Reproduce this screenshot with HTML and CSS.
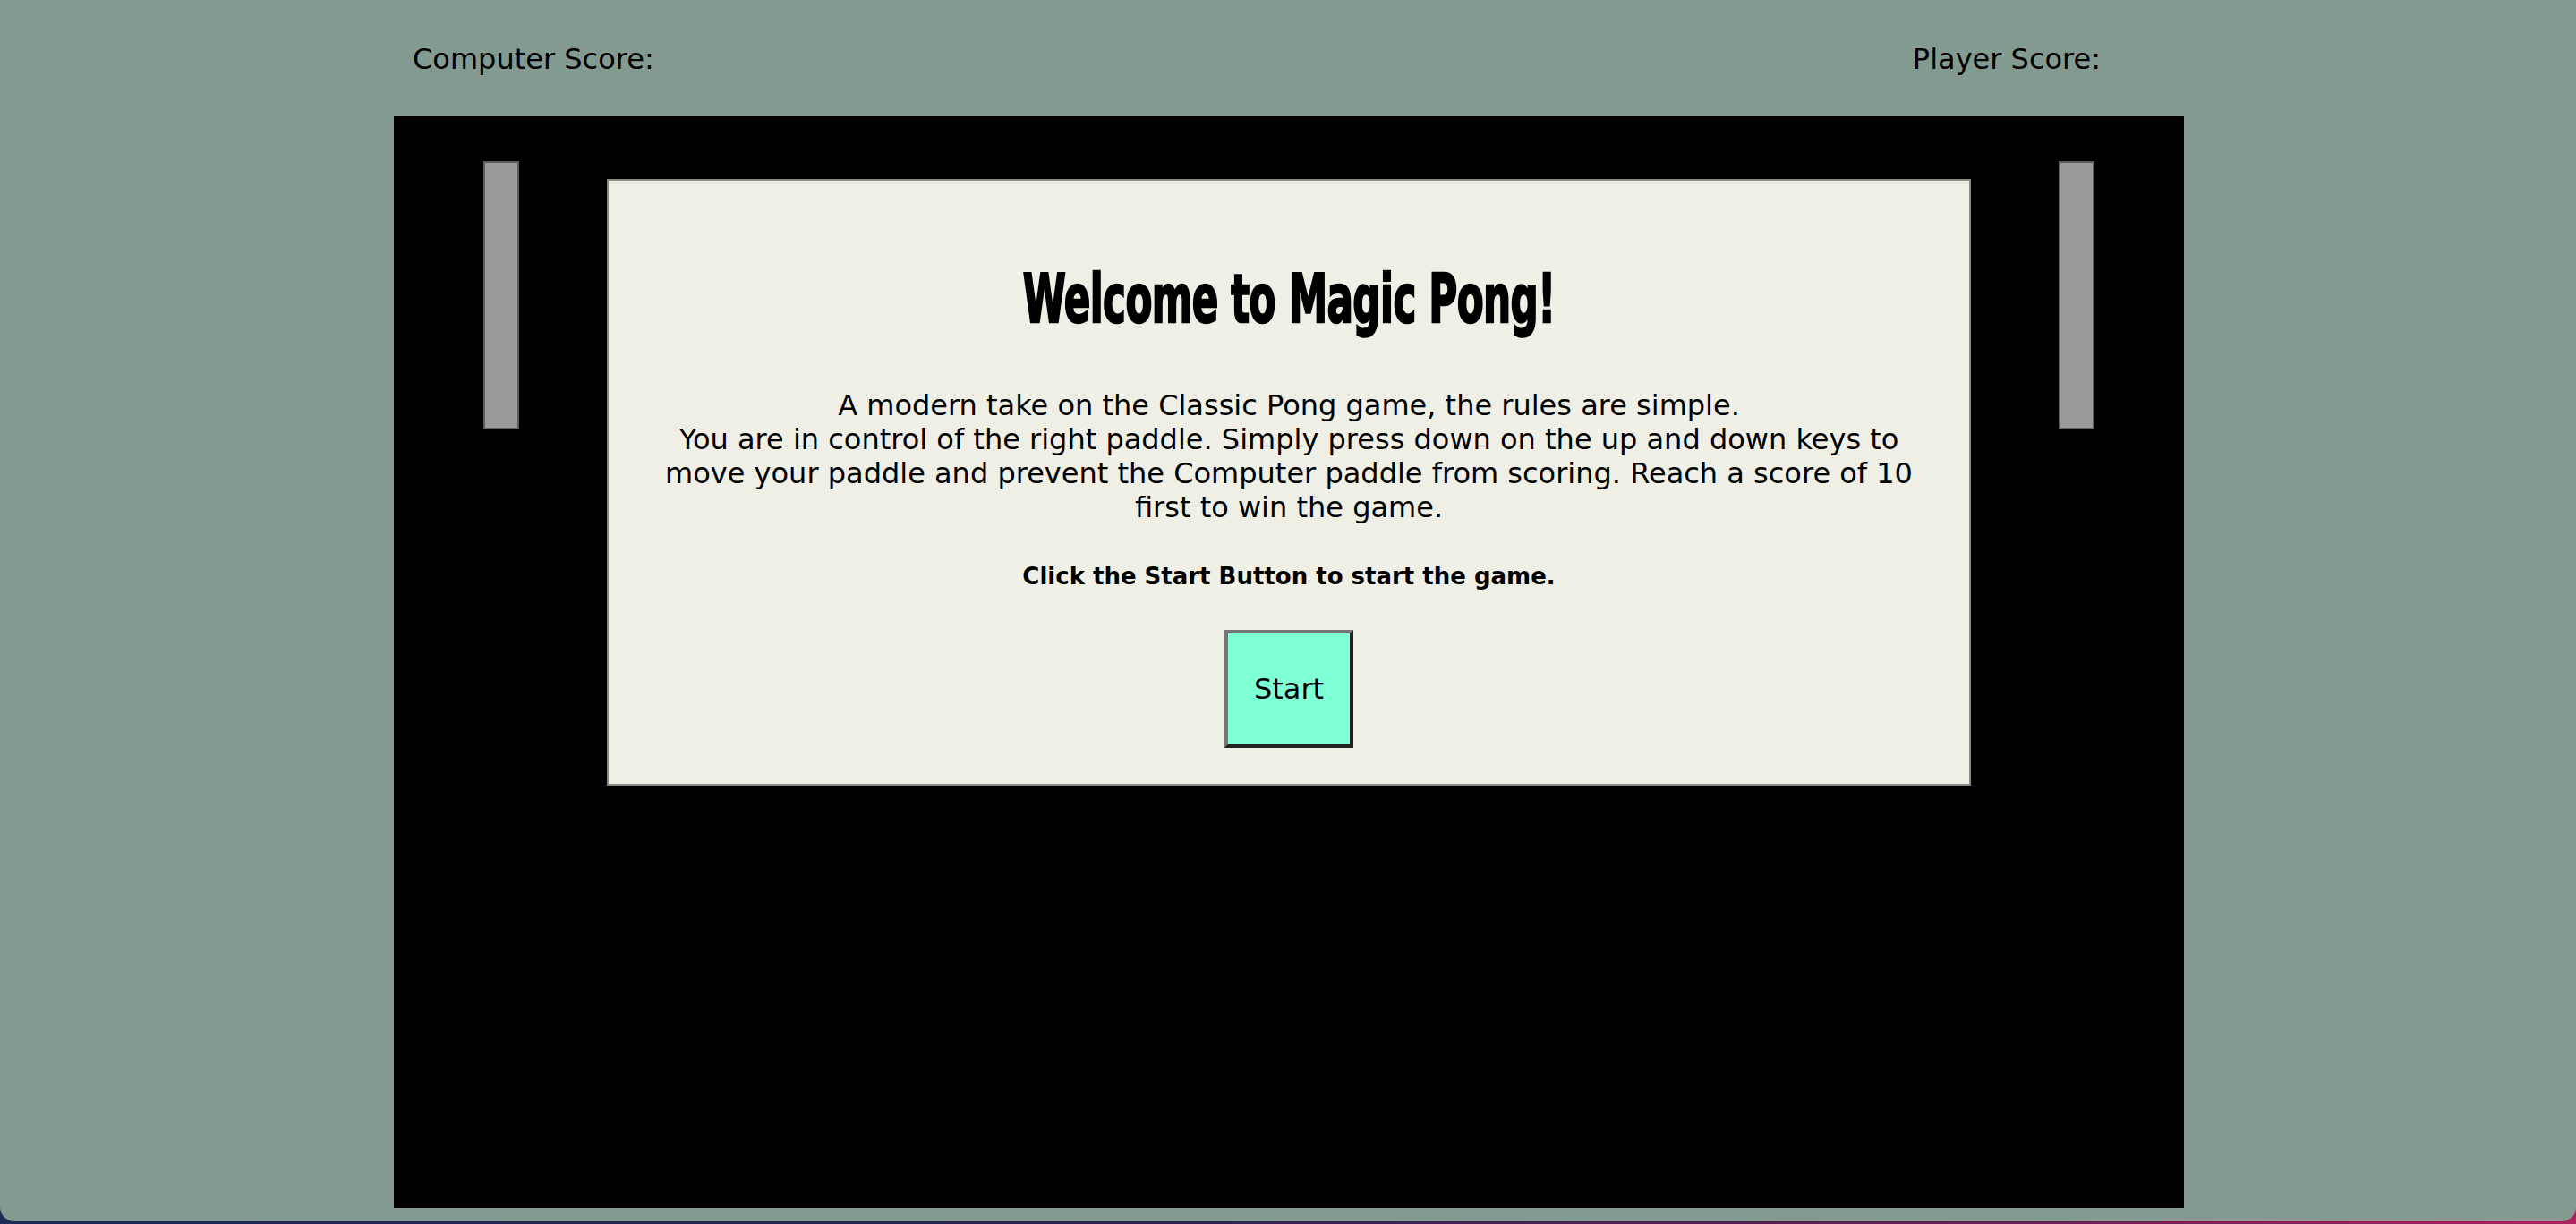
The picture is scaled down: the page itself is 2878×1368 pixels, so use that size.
FILE: index.html
```html
<!DOCTYPE html>
<html lang="en">
<head>
<meta charset="utf-8">
<title>Magic Pong</title>
<link rel="stylesheet" href="styles.css">
</head>
<body>
<div class="page">
  <div class="wrap">
    <header class="scores">
      <div class="score">Computer Score:</div>
      <div class="score">Player Score:</div>
    </header>
    <main class="game">
      <div class="paddle paddle-left"></div>
      <div class="paddle paddle-right"></div>
      <section class="modal">
        <h1 class="title"><span class="title-text">Welcome to Magic Pong!</span></h1>
        <p class="intro">A modern take on the Classic Pong game, the rules are simple.<br>You are in control of the right paddle. Simply press down on the up and down keys to move your paddle and prevent the Computer paddle from scoring. Reach a score of 10 first to win the game.</p>
        <h5 class="hint">Click the Start Button to start the game.</h5>
        <button class="start" type="button">Start</button>
      </section>
    </main>
  </div>
</div>
</body>
</html>
```
FILE: styles.css
```css
html {
  margin: 0;
  background: linear-gradient(90deg, #1c2b55 0%, #2a2450 45%, #6a2055 80%, #b0205f 100%);
}
body {
  margin: 0;
  font-family: "DejaVu Sans", Verdana, sans-serif;
  color: #000;
}
.page {
  background: #839a90;
  min-height: 1365px;
  padding-left: 2px;
  border-radius: 0 0 16px 16px;
  overflow: hidden;
}
.wrap {
  width: 2000px;
  margin: 0 auto;
}
.scores {
  display: flex;
  justify-content: space-between;
  padding: 47px 93px 45px 21px;
  font-size: 32px;
  line-height: 38px;
}
.game {
  position: relative;
  height: 1220px;
  background: #000;
  padding-top: 70px;
  box-sizing: border-box;
}
.paddle {
  position: absolute;
  top: 50px;
  width: 40px;
  height: 300px;
  box-sizing: border-box;
  background: #999;
  border: 2px solid #5c5c5c;
}
.paddle-left { left: 100px; }
.paddle-right { right: 100px; }
.modal {
  width: 1524px;
  margin: 0 auto;
  box-sizing: border-box;
  background: #efefe6;
  border: 2px solid #8a8a86;
  padding: 92px 50px 40px;
  text-align: center;
}
.title {
  margin: 0;
  font-size: 74px;
  line-height: 80px;
  font-weight: 700;
}
.title-text {
  display: inline-block;
  transform: scaleX(0.59);
  -webkit-text-stroke: 2.5px #000;
  letter-spacing: -1px;
}
.intro {
  margin: 60px 0 0;
  font-size: 32px;
  line-height: 38px;
}
.hint {
  margin: 42px 0 0;
  font-size: 26px;
  line-height: 32px;
  font-weight: 700;
}
.start {
  display: block;
  margin: 44px auto 0;
  width: 144px;
  height: 132px;
  box-sizing: border-box;
  background: #7fffd4;
  border: 4px solid #6a6a6a;
  border-color: #767676 #222 #222 #767676;
  font-family: "DejaVu Sans", Verdana, sans-serif;
  font-size: 32px;
  color: #000;
  padding: 0;
}
```
